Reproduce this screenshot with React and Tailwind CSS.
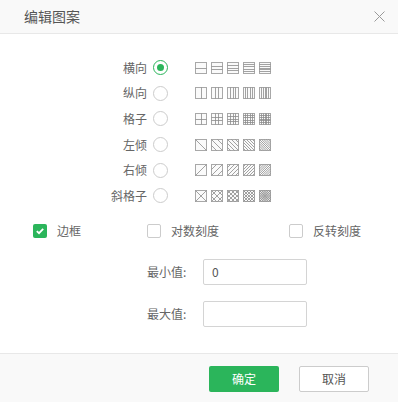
import { useState } from 'react';

const patternRows = [
  { key: 'h', label: '横向' },
  { key: 'v', label: '纵向' },
  { key: 'g', label: '格子' },
  { key: 'l', label: '左倾' },
  { key: 'r', label: '右倾' },
  { key: 'x', label: '斜格子' },
];

const diagSpacing = [11, 6, 4, 3, 2.2];

function diagLines(level) {
  const d = diagSpacing[level - 1];
  const lines = [];
  for (let k = -10; k <= 10; k++) {
    const c = k * d;
    if (Math.abs(c) >= 11) continue;
    if (c >= 0) lines.push([c, 0, 11, 11 - c]);
    else lines.push([0, -c, 11 + c, 11]);
  }
  return lines;
}

function PatternIcon({ kind, level }) {
  const parts = [];
  const step = 11 / (level + 1);

  if (kind === 'h' || kind === 'g') {
    for (let i = 1; i <= level; i++) {
      const y = Math.round(step * i) + 0.5;
      parts.push(<line key={'h' + i} x1="0.5" y1={y} x2="11.5" y2={y} />);
    }
  }
  if (kind === 'v' || kind === 'g') {
    for (let i = 1; i <= level; i++) {
      const x = Math.round(step * i) + 0.5;
      parts.push(<line key={'v' + i} x1={x} y1="0.5" x2={x} y2="11.5" />);
    }
  }
  if (kind === 'l' || kind === 'x') {
    diagLines(level).forEach(([a, b, c, d], i) => {
      parts.push(<line key={'l' + i} x1={a + 0.5} y1={b + 0.5} x2={c + 0.5} y2={d + 0.5} />);
    });
  }
  if (kind === 'r' || kind === 'x') {
    diagLines(level).forEach(([a, b, c, d], i) => {
      parts.push(<line key={'r' + i} x1={11.5 - a} y1={b + 0.5} x2={11.5 - c} y2={d + 0.5} />);
    });
  }

  return (
    <svg width="12" height="12" viewBox="0 0 12 12" className="block">
      <rect x="0.5" y="0.5" width="11" height="11" fill="#fafafa" stroke="#a8a8a8" />
      <g stroke="#8c8c8c" strokeWidth="0.8" fill="none">{parts}</g>
    </svg>
  );
}

function Radio({ checked }) {
  return (
    <span
      className={
        checked
          ? 'ml-[6px] flex h-[15px] w-[15px] items-center justify-center rounded-full border border-[#2bb55b] bg-white'
          : 'ml-[6px] flex h-[15px] w-[15px] items-center justify-center rounded-full border border-[#cccccc] bg-white'
      }
    >
      {checked && <span className="h-[7px] w-[7px] rounded-full bg-[#2bb55b]" />}
    </span>
  );
}

function Checkbox({ checked }) {
  if (checked) {
    return (
      <span className="flex h-[14px] w-[14px] items-center justify-center rounded-[2px] bg-[#2bb55b]">
        <svg width="10" height="10" viewBox="0 0 10 10">
          <path d="M1.8 5.2 L4 7.2 L8.2 2.8" stroke="#ffffff" strokeWidth="1.8" fill="none" />
        </svg>
      </span>
    );
  }
  return <span className="h-[14px] w-[14px] rounded-[2px] border border-[#cccccc] bg-white" />;
}

function App() {
  const [pattern, setPattern] = useState('h');
  const [minValue, setMinValue] = useState('0');
  const [maxValue, setMaxValue] = useState('');

  return (
    <div className="flex h-[402px] w-[398px] flex-col bg-white font-['Noto_Sans_CJK_SC','Noto_Sans',sans-serif] text-[12px] text-[#666666]">
      <div className="flex h-[34px] shrink-0 items-center justify-between border-b border-[#e8e8e8] bg-[#f9f9f9] pl-[24px] pr-[13px]">
        <span className="text-[14px] text-[#555555]">编辑图案</span>
        <svg width="11" height="11" viewBox="0 0 11 11">
          <path d="M0.5 0.5 L10.5 10.5 M10.5 0.5 L0.5 10.5" stroke="#9a9a9a" strokeWidth="1" />
        </svg>
      </div>

      <div className="flex-1 pt-[21px]">
        {patternRows.map((row) => (
          <div
            key={row.key}
            className="flex h-[25.6px] cursor-pointer items-center pl-[87px]"
            onClick={() => setPattern(row.key)}
          >
            <span className="w-[60px] text-right">{row.label}</span>
            <Radio checked={pattern === row.key} />
            <div className="ml-[27px] flex gap-[4px]">
              {[1, 2, 3, 4, 5].map((level) => (
                <PatternIcon key={level} kind={row.key} level={level} />
              ))}
            </div>
          </div>
        ))}

        <div className="mt-[12px] flex h-[20px] items-center pl-[33px]">
          <div className="flex w-[114px] items-center">
            <Checkbox checked />
            <span className="ml-[10px]">边框</span>
          </div>
          <div className="flex w-[142px] items-center">
            <Checkbox />
            <span className="ml-[10px]">对数刻度</span>
          </div>
          <div className="flex items-center">
            <Checkbox />
            <span className="ml-[10px]">反转刻度</span>
          </div>
        </div>

        <div className="mt-[18px] flex items-center pl-[147px]">
          <span className="w-[56px]">最小值:</span>
          <input
            value={minValue}
            onChange={(event) => setMinValue(event.target.value)}
            className="h-[26px] w-[104px] rounded-[2px] border border-[#d4d4d4] px-[8px] text-[12px] text-[#555555] outline-none"
          />
        </div>
        <div className="mt-[16px] flex items-center pl-[147px]">
          <span className="w-[56px]">最大值:</span>
          <input
            value={maxValue}
            onChange={(event) => setMaxValue(event.target.value)}
            className="h-[26px] w-[104px] rounded-[2px] border border-[#d4d4d4] px-[8px] text-[12px] text-[#555555] outline-none"
          />
        </div>
      </div>

      <div className="flex h-[49px] shrink-0 justify-end gap-[20px] border-t border-[#e8e8e8] bg-[#f9f9f9] pr-[29px] pt-[12px]">
        <button
          type="button"
          className="h-[26px] w-[70px] rounded-[2px] bg-[#2bb55b] text-[12px] text-white"
        >
          确定
        </button>
        <button
          type="button"
          className="h-[26px] w-[70px] rounded-[2px] border border-[#cccccc] bg-white text-[12px] text-[#555555]"
        >
          取消
        </button>
      </div>
    </div>
  );
}

export default App;
